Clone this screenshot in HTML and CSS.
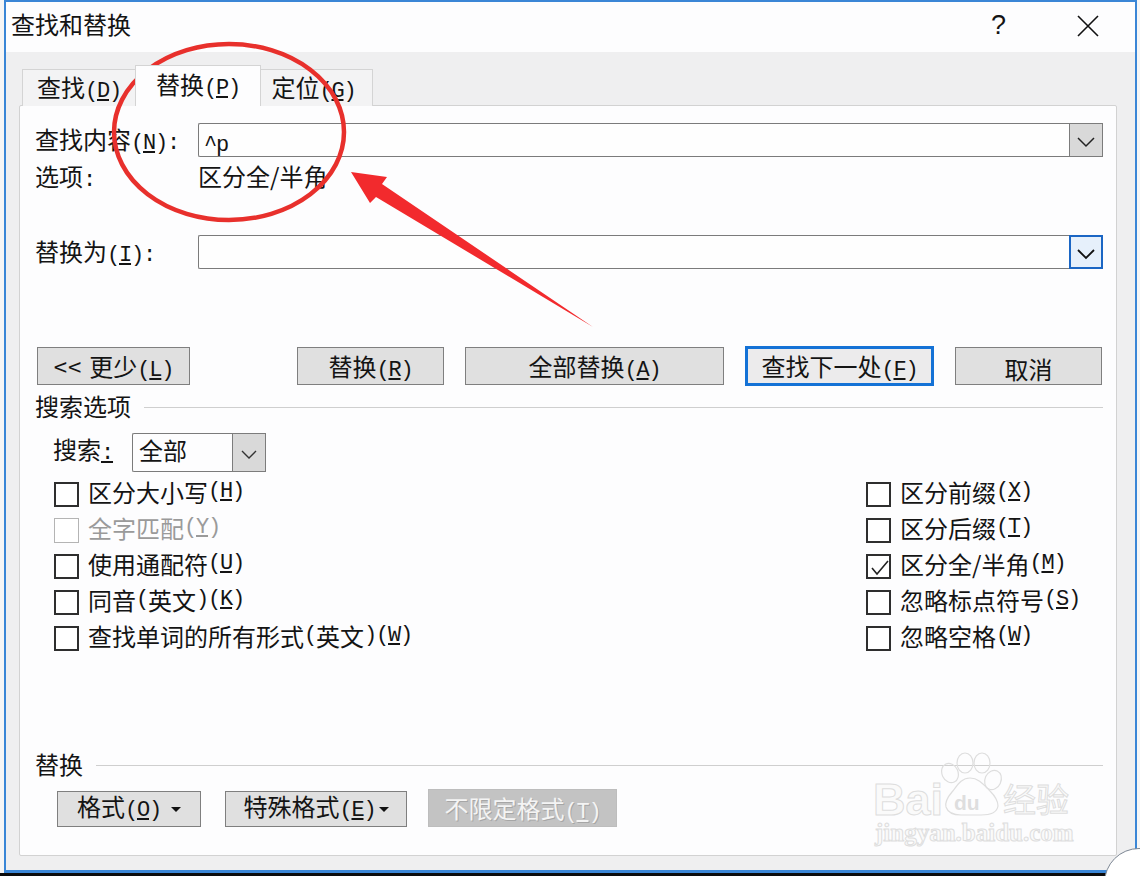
FILE: index.html
```html
<!DOCTYPE html>
<html lang="zh-CN">
<head>
  <meta charset="UTF-8">
  <title>查找和替换</title>
  <link rel="stylesheet" href="styles.css">
</head>
<body>
  <div class="screen">
    <div class="dialog">

      <!-- Barra de titulo -->
      <div class="titlebar">
        <span class="title">查找和替换</span>
        <span class="help">?</span>
        <svg class="close" width="22" height="22" viewBox="0 0 22 22"><path d="M1 1L21 21M21 1L1 21" stroke="#111" stroke-width="1.6" fill="none"/></svg>
      </div>

      <div class="dialog-body">
        <div class="tabs">
          <div class="tab tab-find">查找<span class="key">(<u>D</u>)</span></div>
          <div class="tab tab-active">替换<span class="key">(<u>P</u>)</span></div>
          <div class="tab tab-goto">定位<span class="key">(<u>G</u>)</span></div>
        </div>

        <div class="panel">
          <div class="field">
            <label class="field-label">查找内容<span class="key">(<u>N</u>):</span></label>
            <div class="combo">
              <span class="combo-text"><span class="key">^p</span></span>
              <span class="combo-btn"><svg width="20" height="12" viewBox="0 0 20 12"><path d="M2 2L10 10L18 2" stroke="#222" stroke-width="1.5" fill="none"/></svg></span>
            </div>
          </div>
          <div class="options">
            <span class="field-label">选项<span class="key">:</span></span>
            <span class="options-text">区分全/半角</span>
          </div>

          <div class="field field-replace">
            <label class="field-label">替换为<span class="key">(<u>I</u>):</span></label>
            <div class="combo">
              <span class="combo-text"></span>
              <span class="combo-btn combo-btn-focus"><svg width="20" height="12" viewBox="0 0 20 12"><path d="M2 2L10 10L18 2" stroke="#111" stroke-width="1.8" fill="none"/></svg></span>
            </div>
          </div>

          <div class="actions">
            <button class="btn btn-less"><span class="arrows">&lt;&lt;</span>更少<span class="key">(<u>L</u>)</span></button>
            <button class="btn btn-replace">替换<span class="key">(<u>R</u>)</span></button>
            <button class="btn btn-all">全部替换<span class="key">(<u>A</u>)</span></button>
            <button class="btn btn-next">查找下一处<span class="key">(<u>F</u>)</span></button>
            <button class="btn btn-cancel">取消</button>
          </div>

          <div class="section-head">
            <span class="section-name">搜索选项</span>
            <span class="rule"></span>
          </div>

          <div class="search-row">
            <span class="search-label">搜索<span class="key"><u>:</u></span></span>
            <div class="select">
              <span class="select-text">全部</span>
              <span class="combo-btn"><svg width="20" height="12" viewBox="0 0 20 12"><path d="M3 2L10 9L17 2" stroke="#333" stroke-width="1.4" fill="none"/></svg></span>
            </div>
          </div>

          <div class="checks">
            <div class="check-col">
              <div class="check"><span class="box"></span>区分大小写<span class="key">(<u>H</u>)</span></div>
              <div class="check check-off"><span class="box"></span>全字匹配<span class="key">(<u>Y</u>)</span></div>
              <div class="check"><span class="box"></span>使用通配符<span class="key">(<u>U</u>)</span></div>
              <div class="check"><span class="box"></span>同音<span class="key">(</span>英文<span class="key">)(<u>K</u>)</span></div>
              <div class="check"><span class="box"></span>查找单词的所有形式<span class="key">(</span>英文<span class="key">)(<u>W</u>)</span></div>
            </div>
            <div class="check-col">
              <div class="check"><span class="box"></span>区分前缀<span class="key">(<u>X</u>)</span></div>
              <div class="check"><span class="box"></span>区分后缀<span class="key">(<u>T</u>)</span></div>
              <div class="check"><span class="box"><svg width="23" height="23" viewBox="0 0 23 23"><path d="M4 12L9 18L20 5" stroke="#222" stroke-width="1.6" fill="none"/></svg></span>区分全/半角<span class="key">(<u>M</u>)</span></div>
              <div class="check"><span class="box"></span>忽略标点符号<span class="key">(<u>S</u>)</span></div>
              <div class="check"><span class="box"></span>忽略空格<span class="key">(<u>W</u>)</span></div>
            </div>
          </div>

          <div class="section-head section-replace">
            <span class="section-name">替换</span>
            <span class="rule"></span>
          </div>

          <div class="format-row">
            <button class="btn btn-format">格式<span class="key">(<u>O</u>)</span><span class="caret"></span></button>
            <button class="btn btn-special">特殊格式<span class="key">(<u>E</u>)</span><span class="caret"></span></button>
            <button class="btn btn-disabled">不限定格式<span class="key">(<u>T</u>)</span></button>
          </div>
        </div>
      </div>
    </div>
    <div class="taskbar"></div>

    <!-- Anotaciones encima de la captura -->
    <svg class="marks" width="1140" height="876" viewBox="0 0 1140 876">
      <ellipse cx="229" cy="132" rx="115" ry="88" fill="none" stroke="#e8302c" stroke-width="4.5"/>
      <path d="M351 172L387 177L382 184L593 327L376 197L370 203Z" fill="#f22a2d"/>
    </svg>

    <!-- Marca de agua -->
    <svg class="watermark" width="210" height="110" viewBox="0 0 210 110">
      <g fill="none" stroke="#dedede" stroke-width="1.2">
        <ellipse cx="77" cy="25" rx="8" ry="10" transform="rotate(-25 77 25)"/>
        <ellipse cx="92" cy="15" rx="8" ry="10"/>
        <ellipse cx="109" cy="15" rx="8" ry="10"/>
        <ellipse cx="120" cy="32" rx="8" ry="10" transform="rotate(25 120 32)"/>
        <path d="M97 30C88 30 84 38 79 44C73 51 72 55 73 59C75 65 80 67 88 67L108 67C118 67 124 64 125 58C125 53 122 48 117 43C111 37 106 30 97 30Z"/>
      </g>
      <text class="wm wm-bai" x="0" y="67">Bai</text>
      <text class="wm-du" x="81" y="62">du</text>
      <text class="wm wm-cn" x="130" y="64">经验</text>
      <text class="wm wm-url" x="2" y="93">jingyan.baidu.com</text>
    </svg>

    <div class="curl"></div>
  </div>
</body>
</html>
```

FILE: styles.css
```css
* {
  box-sizing: border-box;
}

body {
  margin: 0;
  font-family: "Noto Sans CJK SC", sans-serif;
  font-size: 24px;
  color: #141414;
}

.screen {
  position: relative;
  width: 1140px;
  height: 876px;
  overflow: hidden;
  background-color: #f6f6f6;
  padding: 0 3px 0 4px;
}

.dialog {
  width: 1133px;
  height: 873px;
  border: 2px solid #3a86d6;
  border-bottom-width: 3px;
  background-color: #fdfdfe;
  display: flex;
  flex-direction: column;
}

.taskbar {
  height: 3px;
  margin: 0 -3px 0 -4px;
  background-color: #0c0c0c;
}

/* Titulo */
.titlebar {
  height: 50px;
  flex-shrink: 0;
  display: flex;
  align-items: center;
  padding: 0 0 6px 5px;
}

.title {
  flex-grow: 1;
  line-height: 46px;
}

.help {
  margin-right: 71px;
  font-family: "Liberation Sans", sans-serif;
  font-size: 27px;
  margin-top: 2px;
}

.close {
  margin-right: 36px;
  margin-top: 4px;
}

.dialog-body {
  flex-grow: 1;
  background-color: #efeff0;
  padding: 13px 18px 14px 13px;
  display: flex;
  flex-direction: column;
}

/* Pestanas */
.tabs {
  display: flex;
  height: 41px;
  align-items: flex-end;
  flex-shrink: 0;
  position: relative;
  margin-bottom: -1px;
}

.tab {
  height: 37px;
  text-align: center;
  line-height: 34px;
  background-color: #f3f3f4;
  border: 1px solid #d4d4d4;
  border-bottom: none;
}

.tab-find {
  width: 113px;
  margin-left: 3px;
  border-right: none;
}

.tab-active {
  width: 126px;
  height: 41px;
  background-color: #fdfdfe;
  line-height: 36px;
  position: relative;
  z-index: 1;
}

.tab-goto {
  width: 112px;
  padding-right: 6px;
  border-left: none;
}

.key {
  font-family: "Liberation Mono", monospace;
  font-size: 22px;
  letter-spacing: -1.2px;
}

/* Panel principal */
.panel {
  flex-grow: 1;
  background-color: #fdfdfe;
  border: 1px solid #d2d2d2;
  border-radius: 2px;
  padding: 17px 13px 0 15px;
  display: flex;
  flex-direction: column;
}

.field {
  display: flex;
  align-items: center;
  height: 34px;
}

.field-label {
  width: 163px;
  padding-bottom: 4px;
  flex-shrink: 0;
}

.combo {
  flex-grow: 1;
  height: 34px;
  display: flex;
  border: 1px solid #7b7b7b;
  border-right: none;
  border-radius: 2px 0 0 2px;
  background-color: #fefefe;
}

.combo-text {
  flex-grow: 1;
  padding-left: 5px;
  line-height: 33px;
}

.combo-btn {
  width: 34px;
  margin: -1px 0;
  flex-shrink: 0;
  display: flex;
  align-items: center;
  justify-content: center;
  padding-top: 4px;
  background-color: #d9d9d9;
  border: 1px solid #7c7c7c;
}

.combo-btn-focus {
  background-color: #e6f0fb;
  border: 2px solid #1b66c4;
}

.options {
  display: flex;
  height: 40px;
  align-items: center;
}

.options-text {
  padding-bottom: 4px;
}

.field-replace {
  margin-top: 38px;
}

/* Botones */
.btn {
  display: block;
  height: 38px;
  padding: 5px 0 0;
  font: inherit;
  line-height: 24px;
  color: inherit;
  background-color: #e0e0e0;
  border: 1px solid #7f7f7f;
}

.actions {
  display: flex;
  margin: 78px 0 0 2px;
}

.arrows {
  margin-right: 7px;
  letter-spacing: 1px;
}

.btn-less {
  width: 153px;
  margin-right: 107px;
}

.btn-replace {
  width: 147px;
  margin-right: 21px;
}

.btn-all {
  width: 259px;
  margin-right: 21px;
}

.btn-next {
  width: 189px;
  margin-right: 21px;
  margin-top: -1px;
  height: 40px;
  background-color: #ecebec;
  border: 3px solid #1472d6;
}

.btn-cancel {
  width: 147px;
}

.section-head {
  display: flex;
  align-items: center;
  height: 43px;
}

.section-name {
  padding-bottom: 5px;
}

.rule {
  flex-grow: 1;
  height: 1px;
  background-color: #cfcfcf;
  margin-left: 13px;
}

.search-row {
  display: flex;
  align-items: center;
  margin: 4px 0 0 18px;
  height: 39px;
}

.search-label {
  width: 79px;
  padding-bottom: 8px;
}

.select {
  width: 134px;
  height: 39px;
  display: flex;
  border: 1px solid #7b7b7b;
  border-right: none;
  border-radius: 2px 0 0 2px;
}

.select-text {
  flex-grow: 1;
  padding-left: 6px;
  line-height: 32px;
}

/* Casillas */
.checks {
  display: flex;
  justify-content: space-between;
  margin: 4px 0 0 19px;
}

.check-col:last-child {
  width: 237px;
}

.check {
  display: flex;
  align-items: center;
  height: 36px;
  padding-bottom: 6px;
  white-space: pre;
}

.box {
  width: 25px;
  height: 25px;
  margin: 6px 9px 0 0;
  flex-shrink: 0;
  border: 2px solid #2e2e2e;
  background-color: #fff;
}

.box svg {
  display: block;
}

.check-off {
  color: #9a9a9a;
}

.check-off .box {
  border: 1px solid #b4b4b4;
}

.section-replace {
  margin-top: 89px;
  height: 40px;
}

.section-replace .section-name {
  padding-bottom: 4px;
}

.format-row {
  display: flex;
  align-items: flex-end;
  margin: 4px 0 0 22px;
}

.btn-format {
  width: 144px;
  height: 36px;
  margin-right: 24px;
  padding: 0 0 1px;
}

.btn-special {
  width: 182px;
  height: 36px;
  margin-right: 21px;
  padding: 0 0 1px;
}

.btn-disabled {
  width: 189px;
  background-color: #c3c3c3;
  border-color: #bdbdbd;
  color: #f4f4f4;
  text-shadow: 1px 1px 0 #a6a6a6;
}

.caret {
  display: inline-block;
  margin-left: 10px;
  vertical-align: middle;
  border-left: 5px solid transparent;
  border-right: 5px solid transparent;
  border-top: 5px solid #111;
}

.btn-special .caret {
  margin-left: 3px;
}

/* Capas encima */
.marks {
  position: absolute;
  left: 0;
  top: 0;
  pointer-events: none;
}

.watermark {
  position: absolute;
  left: 873px;
  top: 748px;
}

.wm {
  fill: #fafafa;
  stroke: #dedede;
  stroke-width: 1;
  font-family: "Liberation Sans", sans-serif;
}

.wm-bai {
  font-size: 45px;
  font-weight: bold;
}

.wm-du {
  fill: #dedede;
  font-family: "Liberation Sans", sans-serif;
  font-size: 21px;
  font-weight: bold;
}

.wm-cn {
  font-size: 33px;
  font-family: "Noto Sans CJK SC", sans-serif;
}

.wm-url {
  font-size: 25px;
  font-weight: bold;
  font-family: "Liberation Serif", serif;
}

.curl {
  position: absolute;
  left: 1104px;
  top: 848px;
  width: 70px;
  height: 70px;
  border-radius: 50%;
  background-color: #fff;
  border: 1px solid #7d8794;
}
```
